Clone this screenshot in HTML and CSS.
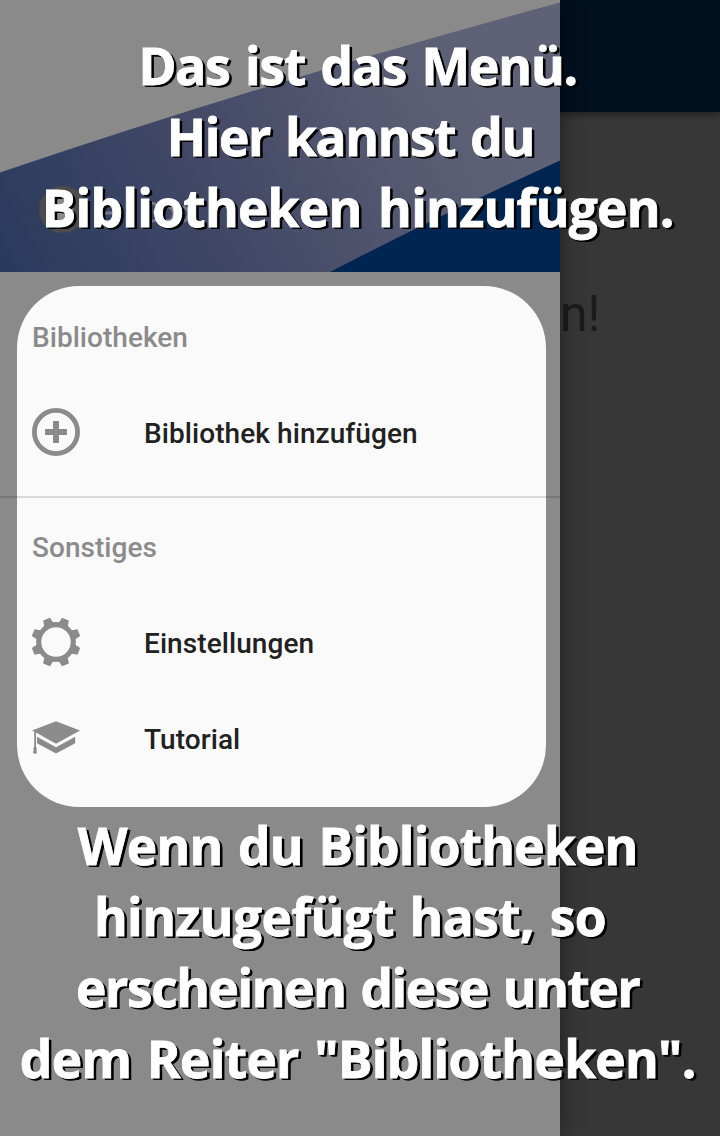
FILE: index.html
```html
<!DOCTYPE html>
<html lang="de">
<head>
<meta charset="utf-8">
<title>Menü</title>
<link rel="stylesheet" href="styles.css">
</head>
<body>
<div class="screen">
  <main class="page">
    <div class="appbar"></div>
    <p class="welcome">n!</p>
  </main>
  <aside class="drawer">
    <header class="drawer-header">
      <svg class="header-art" viewBox="0 0 560 272" width="560" height="272">
        <defs>
          <linearGradient id="band" gradientUnits="userSpaceOnUse" x1="20" y1="290" x2="470" y2="50">
            <stop offset="0" stop-color="#2a3a5d"/>
            <stop offset=".5" stop-color="#464b68"/>
            <stop offset=".8" stop-color="#575b72"/>
            <stop offset="1" stop-color="#5f6276"/>
          </linearGradient>
        </defs>
        <path fill="url(#band)" d="M0 172.500Q267 82 560 2.500V272H0Z"/>
        <path fill="#002550" d="M330 272Q436 217 560 160.500V272Z"/>
        <circle cx="62.500" cy="209.500" r="23.500" fill="#4c4c4c"/>
        <circle cx="62.500" cy="209.500" r="11" fill="#8a8a8a"/>
        <g fill="none" stroke="#777b86" stroke-width="3">
          <path d="M104 213h12"/>
          <path d="M151 203q7 1 6 5t-4 4q6 1 5 5t-6 4"/>
          <ellipse cx="168" cy="214" rx="5.500" ry="7"/>
          <ellipse cx="183" cy="214" rx="5.500" ry="7"/>
        </g>
      </svg>
    </header>
    <nav class="menu">
      <h2 class="group">Bibliotheken</h2>
      <a class="item">
        <svg class="icon" viewBox="0 0 48 48"><circle cx="24" cy="24" r="21.600" fill="none" stroke="#8b8b8b" stroke-width="4.800"/><path d="M24 13v22M13 24h22" stroke="#8b8b8b" stroke-width="6"/></svg>
        <span>Bibliothek hinzufügen</span>
      </a>
      <div class="divider"></div>
      <h2 class="group">Sonstiges</h2>
      <a class="item">
        <svg class="icon" viewBox="0 0 48 48"><g fill="#8b8b8b"><circle cx="24" cy="24" r="17.300" fill="none" stroke="#8b8b8b" stroke-width="5.200"/>
          <g transform="rotate(22.500 24 24)"><path d="M19 6L20.300-.7H27.700L29 6Z"/><path d="M19 6L20.300-.7H27.700L29 6Z" transform="rotate(45 24 24)"/><path d="M19 6L20.300-.7H27.700L29 6Z" transform="rotate(90 24 24)"/><path d="M19 6L20.300-.7H27.700L29 6Z" transform="rotate(135 24 24)"/><path d="M19 6L20.300-.7H27.700L29 6Z" transform="rotate(180 24 24)"/><path d="M19 6L20.300-.7H27.700L29 6Z" transform="rotate(225 24 24)"/><path d="M19 6L20.300-.7H27.700L29 6Z" transform="rotate(270 24 24)"/><path d="M19 6L20.300-.7H27.700L29 6Z" transform="rotate(315 24 24)"/></g></g></svg>
        <span>Einstellungen</span>
      </a>
      <a class="item">
        <svg class="icon" viewBox="0 0 48 48"><path fill="#8b8b8b" d="M24 7.300L48 16.500 24 29.700 4 18.600V33l.9 1.500-.5 1.500.7 3.600H1l.7-3.600L1.200 34.500 2.200 33V17.600L0 16.500ZM5 22.700L24 33.200 43.200 22.700V29.200L24 39.500 5 29.200Z"/></svg>
        <span>Tutorial</span>
      </a>
    </nav>
  </aside>
  <div class="coach">
    <div class="coach-text">
      <p class="line l1">Das ist das Menü.</p>
      <p class="line l2">Hier kannst du </p>
      <p class="line l3">Bibliotheken hinzufügen.</p>
    </div>
    <div class="coach-text">
      <p class="line l4">Wenn du Bibliotheken</p>
      <p class="line l5">hinzugefügt hast, so </p>
      <p class="line l6">erscheinen diese unter</p>
      <p class="line l7">dem Reiter "Bibliotheken".</p>
    </div>
  </div>
</div>
</body>
</html>
```
FILE: styles.css
```css
* { box-sizing: border-box; }
body { margin: 0; font-family: Roboto, sans-serif; }
p, h2 { margin: 0; }

.screen {
  position: relative;
  width: 720px;
  height: 1136px;
  overflow: hidden;
  background: #373737;
}

.appbar {
  height: 112px;
  background: #000f1e;
  box-shadow: 0 2px 8px rgba(0, 0, 0, .45);
}
.welcome {
  padding: 172px 0 0 560px;
  font-size: 50px;
  line-height: 60px;
  color: #1b1b1b;
}

.drawer {
  position: absolute;
  inset: 0 auto 0 0;
  width: 560px;
  background: #8a8a8a;
  box-shadow: 0 0 22px rgba(0, 0, 0, .45);
}
.drawer-header { height: 272px; }
.header-art { display: block; }

.menu {
  position: relative;
  z-index: 1;
  padding-top: 17px;
}
.group {
  height: 96px;
  padding-left: 32px;
  font-size: 28px;
  font-weight: 500;
  line-height: 98px;
  letter-spacing: .04px;
  color: #8b8b8b;
}
.item {
  display: flex;
  align-items: center;
  gap: 64px;
  height: 96px;
  padding-left: 32px;
  font-size: 28px;
  font-weight: 500;
  letter-spacing: .08px;
  color: #212121;
}
.icon { width: 48px; height: 48px; margin-top: -2px; overflow: visible; }
.divider {
  height: 2px;
  margin: 15px 0 1px;
  background: rgba(0, 0, 0, .13);
}

/* highlighted area behind the menu */
.drawer::before {
  content: "";
  position: absolute;
  left: 17px;
  top: 286px;
  width: 529px;
  height: 521px;
  border-radius: 62px;
  background: #fafafa;
}

.coach {
  position: absolute;
  inset: 0;
  z-index: 2;
  display: flex;
  flex-direction: column;
  justify-content: space-between;
  padding: 30px 0 42px;
}
.coach-text {
  margin: 0 -20px 0 -24.5px;
  font-family: "Open Sans", "Noto Sans", sans-serif;
  font-size: 51.5px;
  font-weight: 700;
  line-height: 71px;
  text-align: center;
  color: #fff;
  text-shadow: 1px 1px #000, 2px 2px #000, 3px 2px #000;
  -webkit-text-stroke: .8px #fff;
}
.line { height: 71px; white-space: pre; }
.l1 { letter-spacing: -1.15px; word-spacing: 3px; }
.l2 { letter-spacing: -1.4px; word-spacing: 3px; }
.l3 { letter-spacing: -.78px; word-spacing: 4px; }
.l4 { letter-spacing: -.82px; word-spacing: 3px; }
.l5 { letter-spacing: -.65px; word-spacing: 3px; }
.l6 { letter-spacing: -1.46px; word-spacing: 3px; }
.l7 { letter-spacing: -.74px; word-spacing: 3px; }
```
